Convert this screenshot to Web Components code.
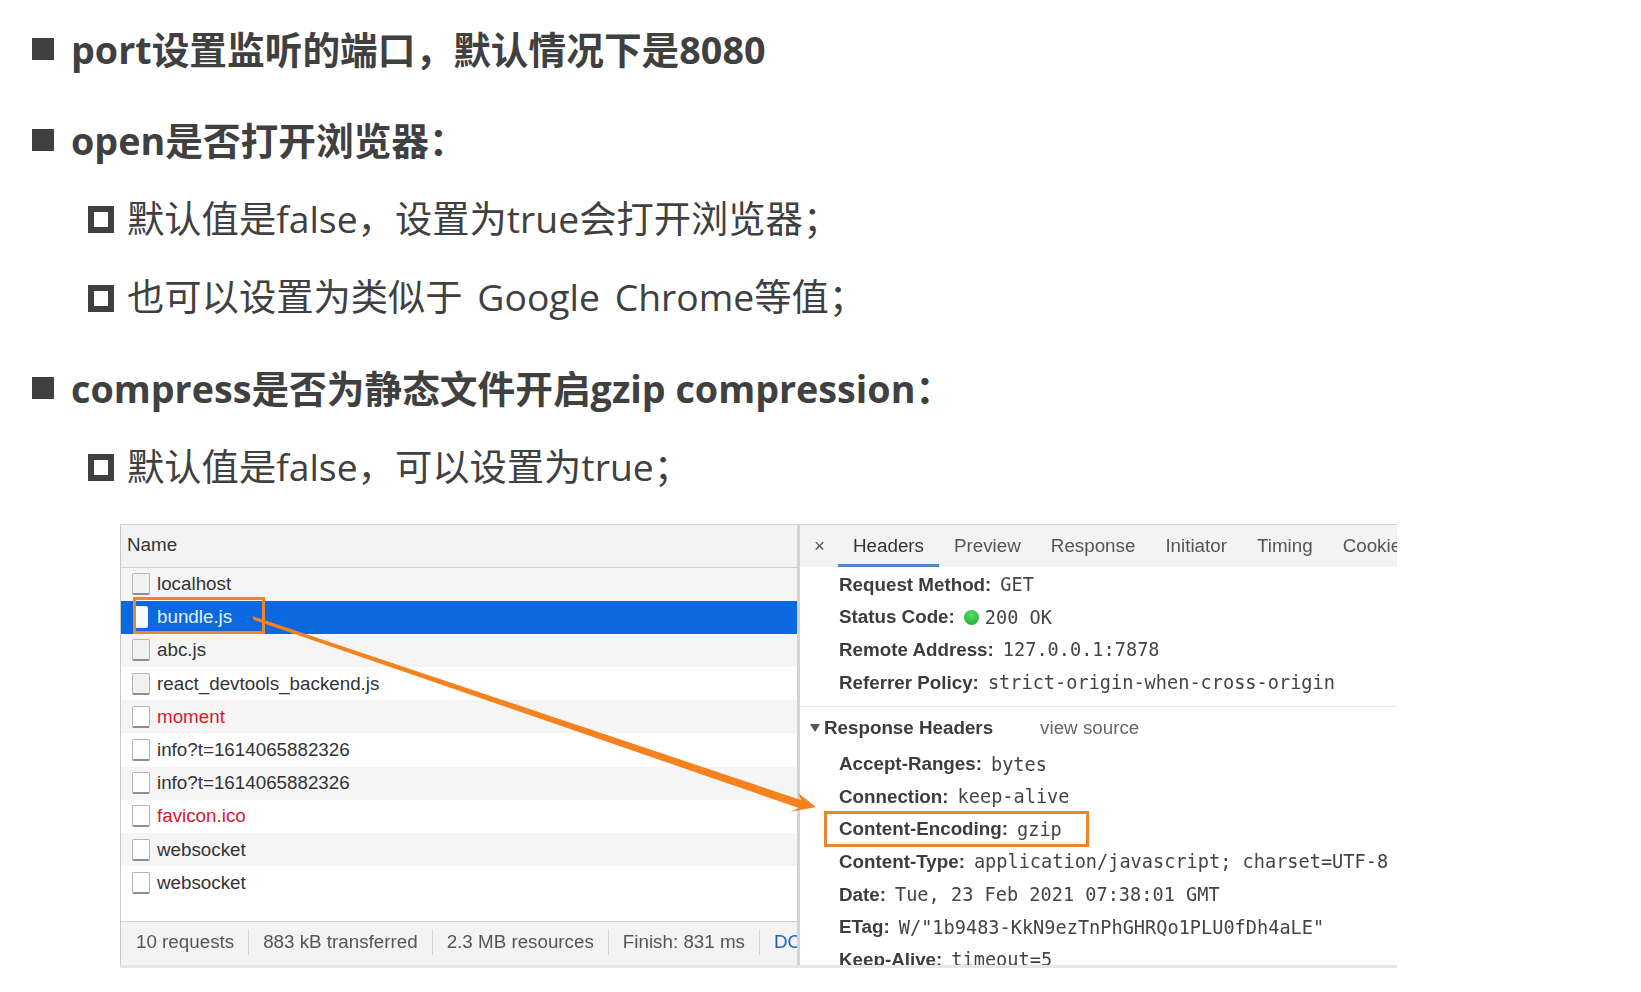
<!DOCTYPE html>
<html lang="zh-CN">
<head>
<meta charset="utf-8">
<title>devServer</title>
<style>
  html, body { margin: 0; padding: 0; background: #fff; }
  body { width: 1641px; height: 992px; overflow: hidden; }
</style>
</head>
<body>
<slide-page>
  <note-line level="1" style="margin-top:0">port设置监听的端口，默认情况下是8080</note-line>
  <note-line level="1">open是否打开浏览器：</note-line>
  <note-line level="2">默认值是false，设置为true会打开浏览器；</note-line>
  <note-line level="2">也可以设置为类似于 Google Chrome等值；</note-line>
  <note-line level="1">compress是否为静态文件开启gzip compression：</note-line>
  <note-line level="2">默认值是false，可以设置为true；</note-line>
  <network-panel></network-panel>
</slide-page>

<script>
class SlidePage extends HTMLElement {
  constructor() {
    super();
    this.attachShadow({ mode: 'open' });
    this.shadowRoot.innerHTML = `
      <style>
        :host {
          display: block;
          padding-top: 22px;
          color: #404040;
          font-family: "Open Sans", "Noto Sans CJK SC", sans-serif;
        }
      </style>
      <slot></slot>
    `;
  }
}

class NoteLine extends HTMLElement {
  constructor() {
    super();
    this.attachShadow({ mode: 'open' });
    this.shadowRoot.innerHTML = `
      <style>
        :host {
          display: flex;
          align-items: center;
          height: 50px;
          white-space: nowrap;
        }
        :host([level="1"]) {
          margin-top: 41px;
          padding-left: 32px;
          font-size: 37.7px;
          font-weight: 700;
        }
        :host([level="2"]) {
          margin-top: 28.5px;
          padding-left: 88px;
          font-size: 37.3px;
          font-weight: 400;
          word-spacing: 5px;
        }
        .mark { flex: none; box-sizing: border-box; }
        :host([level="1"]) .mark {
          width: 22px;
          height: 22px;
          margin: 4px 17px 0 0;
          background: #404040;
        }
        :host([level="2"]) .mark {
          width: 26px;
          height: 27px;
          margin: 6px 13px 0 0;
          border: 6px solid #404040;
        }
      </style>
      <span class="mark"></span><span><slot></slot></span>
    `;
  }
}

class RequestRow extends HTMLElement {
  constructor() {
    super();
    this.attachShadow({ mode: 'open' });
    this.shadowRoot.innerHTML = `
      <style>
        :host {
          display: flex;
          align-items: center;
          height: 33.2px;
          padding-left: 11px;
          gap: 7px;
          color: #333;
          background: #fff;
        }
        :host([shade]) { background: #f5f5f5; }
        :host([failed]) { color: #d9182d; }
        :host([selected]) { background: #0b68e0; color: #e6f0fd; }
        .file {
          box-sizing: border-box;
          width: 18px;
          height: 22px;
          background: #fff;
          border: 1px solid #b5b5b5;
          border-bottom: 2px solid #8e8e8e;
          border-radius: 2px;
        }
        :host([doc]) .file { background: #f1f1f1; }
        :host([selected]) .file { border-color: #e8f0fb; width: 14px; margin: 0 2px; }
      </style>
      <span class="file"></span><slot></slot>
    `;
  }
}

class HeaderRow extends HTMLElement {
  constructor() {
    super();
    this.attachShadow({ mode: 'open' });
    this.shadowRoot.innerHTML = `
      <style>
        :host {
          display: flex;
          align-items: center;
          height: 32.6px;
          padding-left: 39px;
          white-space: nowrap;
          color: #3c3c3c;
        }
        b { font-weight: 700; margin-right: 9px; }
        span {
          display: inline-flex;
          align-items: center;
          font-family: "DejaVu Sans Mono", "Liberation Mono", monospace;
          font-size: 18.6px;
          color: #444;
        }
      </style>
      <b><slot name="label"></slot></b><span><slot></slot></span>
    `;
  }
}

class NetworkPanel extends HTMLElement {
  constructor() {
    super();
    this.attachShadow({ mode: 'open' });
    const files = [
      ['localhost', 'shade doc'],
      ['bundle.js', 'selected'],
      ['abc.js', 'shade doc'],
      ['react_devtools_backend.js', 'doc'],
      ['moment', 'shade failed'],
      ['info?t=1614065882326', ''],
      ['info?t=1614065882326', 'shade'],
      ['favicon.ico', 'failed'],
      ['websocket', 'shade'],
      ['websocket', '']
    ];
    const general = [
      ['Request Method:', 'GET'],
      ['Status Code:', '<i class="dot"></i>200 OK'],
      ['Remote Address:', '127.0.0.1:7878'],
      ['Referrer Policy:', 'strict-origin-when-cross-origin']
    ];
    const response = [
      ['Accept-Ranges:', 'bytes'],
      ['Connection:', 'keep-alive'],
      ['Content-Encoding:', 'gzip'],
      ['Content-Type:', 'application/javascript; charset=UTF-8'],
      ['Date:', 'Tue, 23 Feb 2021 07:38:01 GMT'],
      ['ETag:', 'W/"1b9483-KkN9ezTnPhGHRQo1PLU0fDh4aLE"'],
      ['Keep-Alive:', 'timeout=5']
    ];
    const headerRow = ([label, value]) =>
      `<header-row><span slot="label">${label}</span>${value}</header-row>`;

    this.shadowRoot.innerHTML = `
      <style>
        :host {
          display: block;
          position: relative;
          width: 1277px;
          margin: 34px 0 0 120px;
          font-family: "Liberation Sans", Arial, sans-serif;
          font-size: 18.8px;
          color: #333;
        }
        .frame {
          display: grid;
          grid-template-columns: 680px 1fr;
          height: 440px;
          border-top: 1px solid #d4d4d4;
          border-bottom: 3px solid #e6e6e6;
          filter: blur(0.6px);
          overflow: hidden;
        }
        .list {
          display: flex;
          flex-direction: column;
          border-left: 1px solid #c8c8c8;
          border-right: 3px solid #d4d4d4;
          overflow: hidden;
        }
        .name {
          flex: none;
          display: flex;
          align-items: center;
          height: 41px;
          padding: 0 0 1px 6px;
          background: #f3f3f3;
          border-bottom: 1px solid #cfcfcf;
        }
        .rows { flex: 1; }
        .foot {
          flex: none;
          display: flex;
          align-items: center;
          height: 41px;
          padding: 0 0 2px 1px;
          background: #f3f3f3;
          border-top: 1px solid #cfcfcf;
          white-space: nowrap;
          color: #555;
          overflow: hidden;
        }
        .foot span { padding: 2px 14px; border-right: 1px solid #d4d4d4; }
        .foot span:last-child { border: 0; color: #1a62c8; }
        .detail { min-width: 0; overflow: hidden; }
        .tabs {
          display: flex;
          align-items: center;
          height: 42px;
          background: #f3f3f3;
          white-space: nowrap;
          overflow: hidden;
          color: #555;
        }
        .tabs .close { width: 38px; padding: 0 0 0 14px; box-sizing: border-box; color: #555; }
        .tabs span { flex: none; padding: 0 15px; align-self: stretch; display: flex; align-items: center; }
        .tabs .on { color: #333; box-shadow: inset 0 -3px 0 #4d86d9; }
        .general { border-bottom: 1px solid #e8e8e8; padding: 2px 0 7px; }
        .section {
          display: flex;
          align-items: center;
          height: 38px;
          padding: 2px 0 1px 10px;
          font-weight: 700;
          color: #3c3c3c;
        }
        .section i {
          width: 0; height: 0;
          margin-right: 4px;
          border-left: 5px solid transparent;
          border-right: 5px solid transparent;
          border-top: 8px solid #555;
        }
        .section em { font-style: normal; font-weight: 400; color: #666; margin-left: 47px; }
        .dot {
          display: inline-block;
          width: 15px;
          height: 15px;
          margin-right: 6px;
          border-radius: 50%;
          background: radial-gradient(circle at 50% 35%, #5fdc6a, #12a52c);
        }
        .mark { position: absolute; box-sizing: border-box; border: 3px solid #e8872e; }
        .mark.file { left: 13px; top: 73px; width: 132px; height: 37px; }
        .mark.encoding { left: 703.5px; top: 287px; width: 265px; height: 36px; }
        svg { position: absolute; left: 0; top: 0; pointer-events: none; }
      </style>
      <div class="frame">
        <div class="list">
          <div class="name">Name</div>
          <div class="rows">
            ${files.map(([name, attrs]) => `<request-row ${attrs}>${name}</request-row>`).join('')}
          </div>
          <div class="foot">
            <span>10 requests</span><span>883 kB transferred</span><span>2.3 MB resources</span><span>Finish: 831 ms</span><span>DOMContentLoaded</span>
          </div>
        </div>
        <div class="detail">
          <div class="tabs">
            <span class="close">×</span>
            <span class="on">Headers</span><span>Preview</span><span>Response</span><span>Initiator</span><span>Timing</span><span>Cookies</span>
          </div>
          <div class="general">${general.map(headerRow).join('')}</div>
          <div class="section"><i></i>Response Headers<em>view source</em></div>
          ${response.map(headerRow).join('')}
        </div>
      </div>
      <div class="mark file"></div>
      <div class="mark encoding"></div>
      <svg width="1277" height="444" viewBox="0 0 1277 444">
        <path fill="#f5821f" d="M132 92 L134 96 L679 284 L670 288 L696 283 L678 269 L681 276 Z"/>
      </svg>
    `;
  }
}

customElements.define('slide-page', SlidePage);
customElements.define('note-line', NoteLine);
customElements.define('request-row', RequestRow);
customElements.define('header-row', HeaderRow);
customElements.define('network-panel', NetworkPanel);
</script>
</body>
</html>
